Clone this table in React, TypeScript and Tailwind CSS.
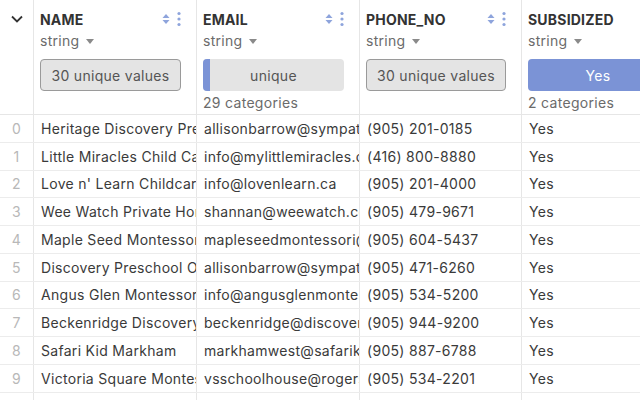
import React from "react";

interface Row {
  name: string;
  email: string;
  phone: string;
  subsidized: string;
}

const rows: Row[] = [
  { name: "Heritage Discovery Preschool", email: "allisonbarrow@sympatico.ca", phone: "(905) 201-0185", subsidized: "Yes" },
  { name: "Little Miracles Child Care", email: "info@mylittlemiracles.ca", phone: "(416) 800-8880", subsidized: "Yes" },
  { name: "Love n' Learn Childcare", email: "info@lovenlearn.ca", phone: "(905) 201-4000", subsidized: "Yes" },
  { name: "Wee Watch Private Home", email: "shannan@weewatch.com", phone: "(905) 479-9671", subsidized: "Yes" },
  { name: "Maple Seed Montessori", email: "mapleseedmontessori@gmail.com", phone: "(905) 604-5437", subsidized: "Yes" },
  { name: "Discovery Preschool Of Markham", email: "allisonbarrow@sympatico.ca", phone: "(905) 471-6260", subsidized: "Yes" },
  { name: "Angus Glen Montessori", email: "info@angusglenmontessori.com", phone: "(905) 534-5200", subsidized: "Yes" },
  { name: "Beckenridge Discovery", email: "beckenridge@discoverypreschool.ca", phone: "(905) 944-9200", subsidized: "Yes" },
  { name: "Safari Kid Markham", email: "markhamwest@safarikid.com", phone: "(905) 887-6788", subsidized: "Yes" },
  { name: "Victoria Square Montessori", email: "vsschoolhouse@rogers.com", phone: "(905) 534-2201", subsidized: "Yes" },
  { name: "Markham Children's Centre", email: "info@markhamchildren.ca", phone: "(905) 555-0101", subsidized: "Yes" },
];

const SortIcon = () => (
  <svg width="8" height="12" viewBox="0 0 8 12" className="text-[#8ea4dc]">
    <path d="M4 1 L7.5 5 H0.5 Z" fill="currentColor" />
    <path d="M4 11 L7.5 7 H0.5 Z" fill="currentColor" />
  </svg>
);

const DotsIcon = () => (
  <svg width="4" height="16" viewBox="0 0 4 16" className="text-[#8ea4dc]">
    <circle cx="2" cy="2.5" r="1.6" fill="currentColor" />
    <circle cx="2" cy="8" r="1.6" fill="currentColor" />
    <circle cx="2" cy="13.5" r="1.6" fill="currentColor" />
  </svg>
);

const TypeLabel = () => (
  <div className="flex items-center gap-[6px] text-[14px] text-[#6b6b6b] leading-[20px] mt-[1px] tracking-[0.3px]">
    string
    <svg width="8" height="5" viewBox="0 0 8 5" className="text-[#8a8a8a]">
      <path d="M0 0 H8 L4 5 Z" fill="currentColor" />
    </svg>
  </div>
);

const HeaderCell = ({
  title,
  width,
  children,
}: {
  title: string;
  width: string;
  children: React.ReactNode;
}) => (
  <div className={`${width} shrink-0 border-r border-[#e6e6e6] pl-[6px] pr-[15px] pt-[8px]`}>
    <div className="flex items-center justify-between h-[22px]">
      <span className="font-bold text-[14px] text-[#333] tracking-[0.2px]">{title}</span>
      <div className="flex items-center gap-[7px]">
        <SortIcon />
        <DotsIcon />
      </div>
    </div>
    <TypeLabel />
    <div className="mt-[8px]">{children}</div>
  </div>
);

const UniqueBox = () => (
  <div className="h-[32px] rounded-[4px] border border-[#9a9a9a] bg-[#e4e4e4] flex items-center justify-center text-[14px] text-[#555] tracking-[0.3px]">
    30 unique values
  </div>
);

export default function App() {
  return (
    <div
      className="w-[640px] h-[400px] overflow-hidden bg-white"
      style={{ fontFamily: "Inter, 'Liberation Sans', sans-serif" }}
    >
      <div className="w-[800px]">
        <div className="flex h-[115px] border-b border-[#e6e6e6]">
          <div className="w-[34px] shrink-0 border-r border-[#e6e6e6] flex justify-center pt-[12px]">
            <svg width="14" height="14" viewBox="0 0 14 14">
              <path d="M2 4.5 L7 9.5 L12 4.5" stroke="#333" strokeWidth="1.8" fill="none" />
            </svg>
          </div>
          <HeaderCell title="NAME" width="w-[163px]">
            <UniqueBox />
          </HeaderCell>
          <HeaderCell title="EMAIL" width="w-[163px]">
            <div className="h-[32px] rounded-[4px] bg-[#e4e4e4] flex items-center relative overflow-hidden text-[14px] text-[#555] tracking-[0.3px]">
              <div className="absolute left-0 top-0 bottom-0 w-[7px] bg-[#7b93d6]" />
              <span className="w-full text-center">unique</span>
            </div>
            <div className="text-[14px] text-[#6b6b6b] leading-[18px] mt-[3px] tracking-[0.3px]">29 categories</div>
          </HeaderCell>
          <HeaderCell title="PHONE_NO" width="w-[162px]">
            <UniqueBox />
          </HeaderCell>
          <HeaderCell title="SUBSIDIZED" width="w-[162px]">
            <div className="h-[32px] rounded-[4px] bg-[#7b93d6] flex items-center justify-center text-[14px] text-white tracking-[0.3px]">
              Yes
            </div>
            <div className="text-[14px] text-[#6b6b6b] leading-[18px] mt-[3px] tracking-[0.3px]">2 categories</div>
          </HeaderCell>
        </div>
        {rows.map((r, i) => (
          <div
            key={i}
            className="flex h-[27.75px] border-b border-[#ececec] text-[14px] text-[#3a3a3a] tracking-[0.3px]"
          >
            <div className="w-[34px] shrink-0 border-r border-[#e6e6e6] flex items-center justify-center text-[#b8b8b8]">
              {i}
            </div>
            <div className="w-[163px] shrink-0 border-r border-[#e6e6e6] px-[7px] flex items-center overflow-hidden whitespace-nowrap">
              {r.name}
            </div>
            <div className="w-[163px] shrink-0 border-r border-[#e6e6e6] px-[7px] flex items-center overflow-hidden whitespace-nowrap">
              {r.email}
            </div>
            <div className="w-[162px] shrink-0 border-r border-[#e6e6e6] px-[7px] flex items-center overflow-hidden whitespace-nowrap">
              {r.phone}
            </div>
            <div className="w-[162px] shrink-0 px-[7px] flex items-center">{r.subsidized}</div>
          </div>
        ))}
      </div>
    </div>
  );
}
